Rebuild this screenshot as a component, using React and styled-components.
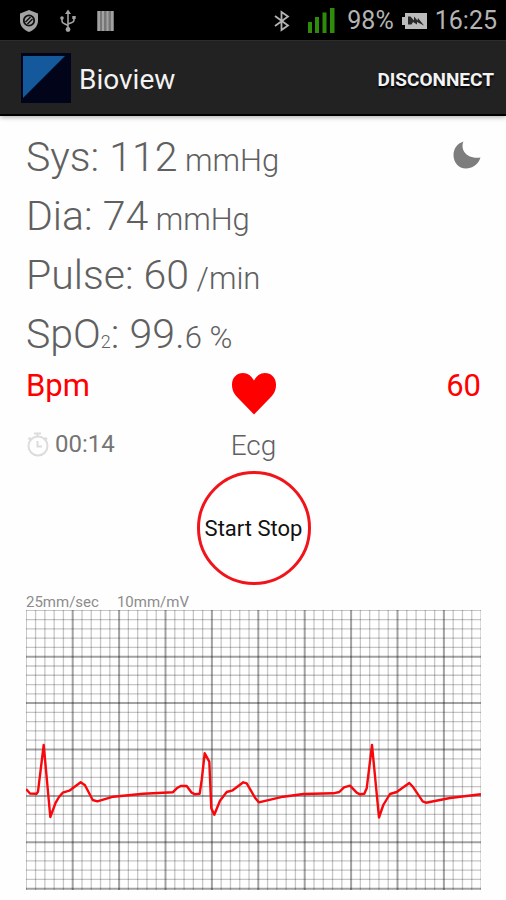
import React from 'react';
import styled, { createGlobalStyle } from 'styled-components';

const GlobalStyle = createGlobalStyle`
    * {
        box-sizing: border-box;
    }

    body {
        margin: 0;
        background: #fefefe;
        font-family: Roboto, sans-serif;
        color: #757575;
    }
`;

const StatusBar = styled.div`
    display: flex;
    align-items: center;
    justify-content: space-between;
    height: 40px;
    padding: 1px 9px 0 19px;
    background: #000;
    color: #b4b4b4;
    font-size: 25px;
    line-height: 40px;
`;

const StatusGroup = styled.div`
    display: flex;
    align-items: center;
    gap: ${props => props.gap};
`;

const Header = styled.header`
    display: flex;
    align-items: center;
    height: 76px;
    padding: 0 12px 0 21px;
    background: #222;
    border-top: 1px solid #2c2c2c;
    border-bottom: 2px solid #000;
    box-shadow: 0 1px 5px rgba(0, 0, 0, 0.35);
    color: #f3f3f3;
`;

const Title = styled.h1`
    flex: 1;
    margin: 4px 0 0 8px;
    font-size: 28px;
    font-weight: 400;
`;

const HeaderButton = styled.button`
    margin-top: 4px;
    padding: 0;
    border: none;
    background: none;
    color: #f3f3f3;
    font-family: inherit;
    font-size: 19px;
    font-weight: 700;
    text-shadow: 0 2px 2px #000;
    cursor: pointer;
`;

const Main = styled.main`
    padding: 12px 25px 8px 26px;
`;

const Readings = styled.section`
    display: flex;
    justify-content: space-between;
    align-items: flex-start;
`;

const Reading = styled.p`
    margin: 0;
    color: #606060;
    font-size: 41px;
    font-weight: 300;
    line-height: 59px;
    white-space: pre;
`;

const Unit = styled.span`
    font-size: 31px;
    line-height: 1;
`;

const Subscript = styled.span`
    font-size: 18px;
    line-height: 1;
`;

const NightButton = styled.button`
    display: flex;
    margin-top: 13px;
    padding: 0;
    border: none;
    background: none;
    cursor: pointer;
`;

const Monitor = styled.section`
    display: grid;
    grid-template-columns: 1fr auto 1fr;
    align-items: start;
    margin-top: 4px;
`;

const Rate = styled.div`
    height: 60px;
    color: #f00;
    font-size: 31px;
    line-height: 36px;
    text-align: ${props => props.align || 'left'};
`;

const HeartBox = styled.div`
    display: flex;
    justify-content: center;
    padding-top: 4px;
`;

const Timer = styled.div`
    display: flex;
    align-items: center;
    gap: 6px;
    font-size: 24px;
    line-height: 32px;
`;

const Label = styled.h2`
    margin: 0;
    color: #606060;
    font-size: 28px;
    font-weight: 300;
    line-height: 36px;
    text-align: center;
`;

const RoundButton = styled.button`
    display: block;
    width: 114px;
    height: 114px;
    margin: 7px auto 0;
    padding: 0;
    border: 3px solid #f2141b;
    border-radius: 50%;
    background: #fff;
    color: #111;
    font-family: inherit;
    font-size: 22px;
    white-space: nowrap;
    cursor: pointer;
`;

const Scale = styled.div`
    display: flex;
    gap: 18px;
    margin-top: 9px;
    color: #8c8c8c;
    font-size: 15px;
    line-height: 16px;
`;

const Chart = styled.svg`
    display: block;
    width: 100%;
    height: auto;
`;

const ECG = [
    [0, 179], [4, 183.5], [10.7, 183.7], [12, 181.7], [17.7, 135], [20, 160], [24.3, 207], [29.7, 192.7],
    [33, 187], [36.7, 182.7], [43.3, 180.7], [54.7, 172.3], [59, 175.3], [66.7, 190], [71.3, 191.3],
    [87.3, 186.7], [117.3, 183.7], [146.7, 182.3], [150.7, 178.3], [154.7, 176], [160.7, 176],
    [165.7, 182.7], [169, 184.3], [173.7, 183.7], [175.7, 170], [178.7, 143.3], [183.3, 151.7],
    [185.3, 198.3], [188.3, 204.7], [194, 190.7], [200.7, 182], [206.7, 180.3], [217.3, 172.3],
    [220.7, 173.3], [229, 187.7], [232.8, 192.3], [257.3, 186.7], [277.3, 184], [307.3, 183.3],
    [313.3, 182], [318, 177.3], [324, 175.7], [330.7, 182.7], [334, 184.3], [338.3, 183.7],
    [340.7, 178.3], [346, 135], [353, 207.5], [357.3, 195], [364, 184], [370.7, 182], [383.3, 173],
    [387.3, 177.3], [396.7, 191.3], [400, 192.7], [424, 188], [455, 184.3],
];

const STEP = 9.28;

const lines = count => Array.from({ length: count }, (_, i) => i);

const ShieldIcon = () => (
    <svg width="20" height="24" viewBox="0 0 20 24">
        <path d="M10 1 L19 4.500 V12 C19 17 15 21 10 23 C5 21 1 17 1 12 V4.500 Z" fill="#a3a3a3" />
        <circle cx="10" cy="11.500" r="5.200" fill="none" stroke="#111" strokeWidth="1.800" />
        <path d="M6.500 13 L11.500 8 M8.500 15 L13.500 10" stroke="#111" strokeWidth="1.500" />
    </svg>
);

const UsbIcon = () => (
    <svg width="16" height="24" viewBox="0 0 16 24" fill="none" stroke="#a3a3a3" strokeWidth="1.600">
        <path d="M8 3 V20 M2 9 V12 Q2 14 4 14.500 L8 16.500 M14 8 V11 Q14 13 12 13.500 L8 15" />
        <path d="M8 0.500 L11 5 H5 Z M12.300 7 H15.700 V10 H12.300 Z" fill="#a3a3a3" stroke="none" />
        <circle cx="2" cy="9" r="1.800" fill="#a3a3a3" stroke="none" />
        <circle cx="8" cy="20.500" r="2.400" fill="#a3a3a3" stroke="none" />
    </svg>
);

const BarsIcon = () => (
    <svg width="17" height="20" viewBox="0 0 17 20">
        <rect width="17" height="20" fill="#777" />
        <path d="M2 0 V20 M6 0 V20 M10.500 0 V20 M15 0 V20" stroke="#a2a2a2" strokeWidth="2" />
    </svg>
);

const BluetoothIcon = () => (
    <svg width="16" height="22" viewBox="0 0 16 22" fill="none" stroke="#b4b4b4" strokeWidth="1.800">
        <path d="M1 6 L14 15.500 L7.500 20 V2 L14 6.500 L1 16" />
    </svg>
);

const SignalIcon = () => (
    <svg width="27" height="25" viewBox="0 0 27 25" fill="#2d8d0b">
        <rect x="0" y="14" width="4" height="11" />
        <rect x="7" y="9" width="4" height="16" />
        <rect x="14.500" y="4.500" width="4" height="20.500" />
        <rect x="22" y="0" width="4.500" height="25" />
    </svg>
);

const BatteryIcon = () => (
    <svg width="25" height="16" viewBox="0 0 25 16">
        <path d="M3 0 H25 V16 H3 V12 H0 V4 H3 Z" fill="#bcbcbc" />
        <path d="M6 3.500 L8.500 3.500 L12 7.500 V3.500 L15.500 7.500 L16 5 L22 12.500 L15 9 V11.500 L11 9 L9.500 11.500 L6 11.500 Z" fill="#2a2a2a" />
    </svg>
);

const Logo = () => (
    <svg width="50" height="50" viewBox="0 0 50 50">
        <rect width="50" height="50" fill="#02041a" />
        <path d="M2 3 H44 L2 45 Z" fill="#13599c" />
    </svg>
);

const MoonIcon = () => (
    <svg width="28" height="28" viewBox="0 0 28 28">
        <path d="M10.500 0.500 C7 8 13 18.500 27.500 16.500 C25 24 19 27.500 13 27.500 C5.500 27.500 0.500 21.500 0.500 14 C0.500 8 4 2.500 10.500 0.500 Z" fill="#7d7d7d" />
    </svg>
);

const HeartIcon = () => (
    <svg width="46" height="43" viewBox="0 0 46 43">
        <path d="M23 42.500 L7 26 C3 22 1 18.500 1 12.500 C1 5.500 6 1 12 1 C17 1 20.500 4 23 8.500 C25.500 4 29 1 34 1 C40 1 45 5.500 45 12.500 C45 18.500 43 22 39 26 Z" fill="#f00" />
    </svg>
);

const StopwatchIcon = () => (
    <svg width="23" height="25" viewBox="0 0 23 25" fill="none" stroke="#dcdcdc" strokeWidth="2">
        <circle cx="12" cy="14" r="9.500" />
        <path d="M8 1.500 H15 M11.500 1 V5 M11.500 9 V14.500 H16 M19 5.500 L21 7.500 M4.500 5.500 L2.500 7.500" />
    </svg>
);

const EcgChart = () => (
    <Chart viewBox="0 0 455 281" role="img" aria-label="Ecg">
        {lines(50).map(i => (
            <line
                key={`v${i}`}
                x1={0.3 + i * STEP}
                x2={0.3 + i * STEP}
                y1="0"
                y2="280"
                stroke="#000"
                strokeOpacity={i && i % 5 === 0 ? 0.36 : 0.22}
                strokeWidth={i && i % 5 === 0 ? 2 : 1.3}
            />
        ))}
        {lines(31).map(i => (
            <line
                key={`h${i}`}
                x1="0"
                x2="455"
                y1={0.3 + i * STEP}
                y2={0.3 + i * STEP}
                stroke="#000"
                strokeOpacity={i && i % 5 === 0 ? 0.36 : 0.22}
                strokeWidth={i && i % 5 === 0 ? 2 : 1.3}
            />
        ))}
        <polyline
            points={ECG.map(([x, y]) => `${x},${y}`).join(' ')}
            fill="none"
            stroke="#f8080c"
            strokeWidth="2.4"
            strokeLinejoin="round"
        />
    </Chart>
);

const App = () => {
    return (
        <>
            <GlobalStyle />
            <StatusBar>
                <StatusGroup gap="21px">
                    <ShieldIcon />
                    <UsbIcon />
                    <BarsIcon />
                </StatusGroup>
                <StatusGroup gap="12px">
                    <StatusGroup gap="18px">
                        <BluetoothIcon />
                        <SignalIcon />
                    </StatusGroup>
                    <StatusGroup gap="8px">
                        <span>98%</span>
                        <BatteryIcon />
                        <span>16:25</span>
                    </StatusGroup>
                </StatusGroup>
            </StatusBar>
            <Header>
                <Logo />
                <Title>Bioview</Title>
                <HeaderButton>DISCONNECT</HeaderButton>
            </Header>
            <Main>
                <Readings>
                    <div>
                        <Reading>Sys: 112<Unit> mmHg</Unit></Reading>
                        <Reading>Dia: 74<Unit> mmHg</Unit></Reading>
                        <Reading>Pulse: 60<Unit> /min</Unit></Reading>
                        <Reading>SpO<Subscript>2</Subscript>: 99.<Unit>6 %</Unit></Reading>
                    </div>
                    <NightButton aria-label="Night mode">
                        <MoonIcon />
                    </NightButton>
                </Readings>
                <Monitor>
                    <Rate>Bpm</Rate>
                    <HeartBox>
                        <HeartIcon />
                    </HeartBox>
                    <Rate align="right">60</Rate>
                    <Timer>
                        <StopwatchIcon />
                        <span>00:14</span>
                    </Timer>
                    <Label>Ecg</Label>
                </Monitor>
                <RoundButton>Start Stop</RoundButton>
                <Scale>
                    <span>25mm/sec</span>
                    <span>10mm/mV</span>
                </Scale>
                <EcgChart />
            </Main>
        </>
    );
}

export default App;
